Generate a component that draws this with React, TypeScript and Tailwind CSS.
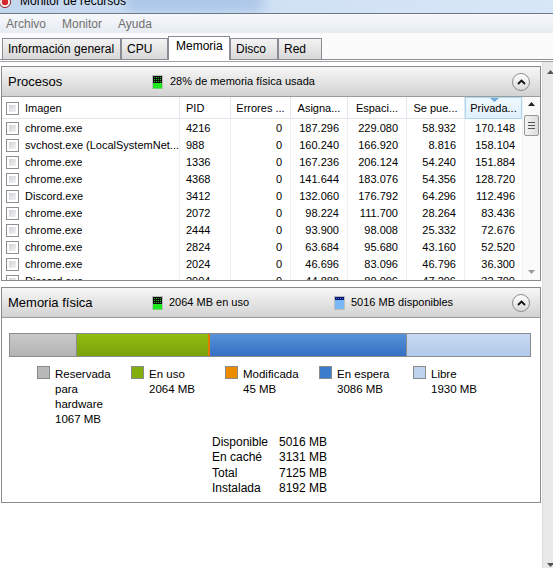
import React from 'react';

const procesos = [
  ['chrome.exe', '4216', '0', '187.296', '229.080', '58.932', '170.148'],
  ['svchost.exe (LocalSystemNet...', '988', '0', '160.240', '166.920', '8.816', '158.104'],
  ['chrome.exe', '1336', '0', '167.236', '206.124', '54.240', '151.884'],
  ['chrome.exe', '4368', '0', '141.644', '183.076', '54.356', '128.720'],
  ['Discord.exe', '3412', '0', '132.060', '176.792', '64.296', '112.496'],
  ['chrome.exe', '2072', '0', '98.224', '111.700', '28.264', '83.436'],
  ['chrome.exe', '2444', '0', '93.900', '98.008', '25.332', '72.676'],
  ['chrome.exe', '2824', '0', '63.684', '95.680', '43.160', '52.520'],
  ['chrome.exe', '2024', '0', '46.696', '83.096', '46.796', '36.300'],
  ['Discord.exe', '2904', '0', '44.888', '80.096', '47.296', '32.700'],
];

const leyenda = [
  { color: 'bg-[#b9b9b9]', lines: ['Reservada', 'para', 'hardware', '1067 MB'] },
  { color: 'bg-[#82ae0e]', lines: ['En uso', '2064 MB'] },
  { color: 'bg-[#ec8a00]', lines: ['Modificada', '45 MB'] },
  { color: 'bg-[#3b7ccc]', lines: ['En espera', '3086 MB'] },
  { color: 'bg-[#bdd3ee]', lines: ['Libre', '1930 MB'] },
];

const resumen = [
  ['Disponible', '5016 MB'],
  ['En caché', '3131 MB'],
  ['Total', '7125 MB'],
  ['Instalada', '8192 MB'],
];

const cols = 'grid grid-cols-[178px_51px_60px_57px_59px_58px_57px]';

function Checkbox() {
  return (
    <span className="flex w-[13px] h-[13px] border border-[#8f8f8f] bg-white p-[2px]">
      <span className="flex-1 bg-gradient-to-br from-[#cfd2d6] to-[#f4f4f4]" />
    </span>
  );
}

function Collapse() {
  return (
    <span className="w-[18px] h-[18px] rounded-full border border-[#8d8d8d] bg-gradient-to-b from-white to-[#d9d9d9] flex items-center justify-center">
      <svg width="9" height="6" viewBox="0 0 9 6">
        <path d="M1 5 L4.5 1.5 L8 5" stroke="#111" strokeWidth="1.8" fill="none" />
      </svg>
    </span>
  );
}

function GreenMeter({ id }: { id: string }) {
  return (
    <svg width="11" height="14" viewBox="0 0 11 14" className="shrink-0">
      <defs>
        <pattern id={id} width="2" height="2" patternUnits="userSpaceOnUse">
          <rect width="2" height="2" fill="#0b0b0b" />
          <rect width="1" height="1" fill="#1fbf1f" />
        </pattern>
      </defs>
      <rect x="0.5" y="0.5" width="10" height="13" fill={`url(#${id})`} stroke="#bdbdbd" />
      <rect x="1" y="8" width="9" height="5.5" fill="#1ee81e" />
    </svg>
  );
}

function BlueMeter() {
  return (
    <svg width="11" height="14" viewBox="0 0 11 14" className="shrink-0">
      <defs>
        <pattern id="bluedots" width="2" height="2" patternUnits="userSpaceOnUse">
          <rect width="2" height="2" fill="#00146e" />
          <rect width="1" height="1" fill="#3a6ee8" />
        </pattern>
      </defs>
      <rect x="0.5" y="0.5" width="10" height="13" fill="#79b8f5" stroke="#bdbdbd" />
      <rect x="1" y="1" width="9" height="3" fill="url(#bluedots)" />
    </svg>
  );
}

function Tab({ label, width, active }: { label: string; width: string; active?: boolean }) {
  if (active) {
    return (
      <div className={`${width} h-[24px] -mb-px relative z-10 bg-white border border-b-0 border-[#898c95] pl-[7px] pt-[2px] leading-[15px]`}>
        {label}
      </div>
    );
  }
  return (
    <div className={`${width} h-[21px] border border-b-0 border-[#898c95] bg-gradient-to-b from-[#f3f3f3] to-[#d8d8d8] pl-[5px] leading-[21px]`}>
      {label}
    </div>
  );
}

export default function App() {
  return (
    <div className="w-[553px] h-[568px] overflow-hidden bg-white text-black font-['Liberation_Sans',Arial,sans-serif] flex flex-col">
      {/* barra de título */}
      <div className="h-[14px] shrink-0 overflow-hidden border-b border-[#6e7886] bg-gradient-to-r from-[#c2d6ee] via-[#d0e1f4] to-[#d8e7f7] relative">
        <div className="absolute left-[125px] top-[-8px] w-[140px] h-[20px] rounded-full bg-[#9dbde4] blur-[6px] opacity-70" />
        <div className="relative flex items-start">
          <svg width="12" height="12" viewBox="0 0 12 12" className="mt-[-4px] ml-[-1px]">
            <circle cx="6" cy="6" r="5.5" fill="#fff" stroke="#8a1a1a" />
            <circle cx="6" cy="6" r="3.2" fill="#d4262b" />
          </svg>
          <span className="ml-[9px] mt-[-6px] text-[12px] leading-[14px]">Monitor de recursos</span>
        </div>
      </div>

      {/* menú */}
      <div className="h-[19px] shrink-0 flex items-center gap-[16px] pl-[6px] text-[12px] text-[#707070] bg-gradient-to-b from-[#f6f8fb] to-[#e7ecf2]">
        <span>Archivo</span>
        <span>Monitor</span>
        <span>Ayuda</span>
      </div>

      {/* pestañas */}
      <div className="h-[26px] shrink-0 flex items-end pl-[2px] text-[12px] bg-[#fbfbfb]">
        <Tab label="Información general" width="w-[119px]" />
        <Tab label="CPU" width="w-[47px]" />
        <Tab label="Memoria" width="w-[62px]" active />
        <Tab label="Disco" width="w-[48px]" />
        <Tab label="Red" width="w-[44px]" />
      </div>
      <div className="h-px shrink-0 bg-[#898c95]" />
      <div className="h-px shrink-0 bg-white" />
      <div className="h-px shrink-0 bg-[#a3a3a3]" />

      {/* contenido */}
      <div className="flex flex-1 min-h-0">
        <div className="w-[542px] pt-[4px] pl-px">
          {/* Procesos */}
          <div className="w-[540px] border border-[#8a8a8a]">
            <div className="h-[30px] flex items-center pl-[6px] pr-[10px] border-b border-[#9c9c9c] bg-gradient-to-b from-[#f7f7f7] to-[#d2d2d2]">
              <span className="w-[144px] text-[13px] shrink-0">Procesos</span>
              <GreenMeter id="g1" />
              <span className="ml-[7px] text-[11px]">28% de memoria física usada</span>
              <span className="ml-auto">
                <Collapse />
              </span>
            </div>
            <div className="flex h-[183px]">
              <div className="w-[520px] text-[11px]">
                <div className={`${cols} h-[22px] border-b border-[#e2e6ec] leading-[22px]`}>
                  <div className="flex items-center pl-[4px] gap-[6px] border-r border-[#e3e8ef]">
                    <Checkbox />
                    <span>Imagen</span>
                  </div>
                  <div className="pl-[6px] border-r border-[#e3e8ef]">PID</div>
                  <div className="text-center border-r border-[#e3e8ef]">Errores ...</div>
                  <div className="text-center border-r border-[#e3e8ef]">Asigna...</div>
                  <div className="text-center border-r border-[#e3e8ef]">Espaci...</div>
                  <div className="text-center border-r border-[#e3e8ef]">Se pue...</div>
                  <div className="relative text-center border border-[#a9d5f0] bg-gradient-to-b from-[#eef7fd] to-[#e0f0fb] leading-[20px]">
                    <svg width="9" height="4" viewBox="0 0 9 4" className="absolute left-[24px] top-0">
                      <path d="M0 0 L9 0 L4.5 4 Z" fill="#6ea9d8" />
                    </svg>
                    Privada...
                  </div>
                </div>
                <div className="h-[161px] overflow-hidden">
                  {procesos.map((p, i) => (
                    <div key={i} className={`${cols} h-[17px] leading-[18px]`}>
                      <div className="flex items-center pl-[4px] gap-[6px] border-r border-[#edf1f7] whitespace-nowrap overflow-hidden">
                        <Checkbox />
                        <span>{p[0]}</span>
                      </div>
                      <div className="pl-[6px] border-r border-[#edf1f7]">{p[1]}</div>
                      <div className="text-right pr-[8px] border-r border-[#edf1f7]">{p[2]}</div>
                      <div className="text-right pr-[8px] border-r border-[#edf1f7]">{p[3]}</div>
                      <div className="text-right pr-[8px] border-r border-[#edf1f7]">{p[4]}</div>
                      <div className="text-right pr-[8px] border-r border-[#edf1f7]">{p[5]}</div>
                      <div className="text-right pr-[7px]">{p[6]}</div>
                    </div>
                  ))}
                </div>
              </div>
              {/* barra de desplazamiento interna */}
              <div className="w-[18px] flex flex-col items-center bg-[#fafafa] border-l border-[#f0f0f0]">
                <svg width="7" height="4" viewBox="0 0 7 4" className="mt-[5px]">
                  <path d="M0 4 L3.5 0 L7 4 Z" fill="#222" />
                </svg>
                <div className="mt-[9px] w-[15px] h-[21px] rounded-[2px] border border-[#979797] bg-gradient-to-r from-[#f3f3f3] to-[#dcdcdc] flex flex-col items-center justify-center gap-[2px]">
                  <span className="w-[7px] h-px bg-[#555]" />
                  <span className="w-[7px] h-px bg-[#555]" />
                  <span className="w-[7px] h-px bg-[#555]" />
                </div>
                <svg width="7" height="4" viewBox="0 0 7 4" className="mt-auto mb-[6px]">
                  <path d="M0 0 L7 0 L3.5 4 Z" fill="#9a9a9a" />
                </svg>
              </div>
            </div>
          </div>

          {/* Memoria física */}
          <div className="w-[540px] mt-[6px] border border-[#8a8a8a]">
            <div className="h-[30px] flex items-center pl-[6px] pr-[10px] border-b border-[#9c9c9c] bg-gradient-to-b from-[#f7f7f7] to-[#d2d2d2]">
              <span className="w-[144px] text-[13px] shrink-0">Memoria física</span>
              <span className="w-[182px] flex items-center shrink-0">
                <GreenMeter id="g2" />
                <span className="ml-[6px] text-[11px]">2064 MB en uso</span>
              </span>
              <BlueMeter />
              <span className="ml-[6px] text-[11px]">5016 MB disponibles</span>
              <span className="ml-auto">
                <Collapse />
              </span>
            </div>

            <div className="pt-[15px] pb-[6px]">
              <div className="ml-[7px] w-[522px] h-[24px] flex border border-[#8c8c8c]">
                <div className="w-[67px] border-r border-[#8c8c8c] bg-gradient-to-b from-[#c9c9c9] to-[#b3b3b3]" />
                <div className="w-[131px] bg-gradient-to-b from-[#91bd10] to-[#79a30b]" />
                <div className="w-[2px] bg-[#e07a00]" />
                <div className="w-[197px] border-r border-[#8c8c8c] bg-gradient-to-b from-[#5892d9] to-[#3370c4]" />
                <div className="flex-1 bg-gradient-to-b from-[#c7daf2] to-[#b1c9ea]" />
              </div>

              <div className="mt-[9px] ml-[35px] flex text-[11.5px] leading-[15px]">
                {leyenda.map((l, i) => (
                  <div key={i} className="w-[94px] flex items-start gap-[5px]">
                    <span className={`w-[13px] h-[13px] shrink-0 border border-[#8a8a8a] ${l.color}`} />
                    <div className="h-[60px] mt-px">
                      {l.lines.map((t) => (
                        <div key={t}>{t}</div>
                      ))}
                    </div>
                  </div>
                ))}
              </div>

              <div className="mt-[8px] ml-[210px] grid grid-cols-[67px_auto] text-[12px] leading-[15.3px]">
                {resumen.map(([k, v]) => (
                  <React.Fragment key={k}>
                    <span>{k}</span>
                    <span>{v}</span>
                  </React.Fragment>
                ))}
              </div>
            </div>
          </div>
        </div>

        {/* barra de desplazamiento principal */}
        <div className="w-[11px] bg-[#e9e9e9] border-l border-[#dedede] flex flex-col items-center">
          <svg width="7" height="4" viewBox="0 0 7 4" className="mt-[8px] ml-[4px]">
            <path d="M0 4 L3.5 0 L7 4 Z" fill="#555" />
          </svg>
          <svg width="7" height="4" viewBox="0 0 7 4" className="mt-auto mb-[1px] ml-[4px]">
            <path d="M0 0 L7 0 L3.5 4 Z" fill="#555" />
          </svg>
        </div>
      </div>
    </div>
  );
}
